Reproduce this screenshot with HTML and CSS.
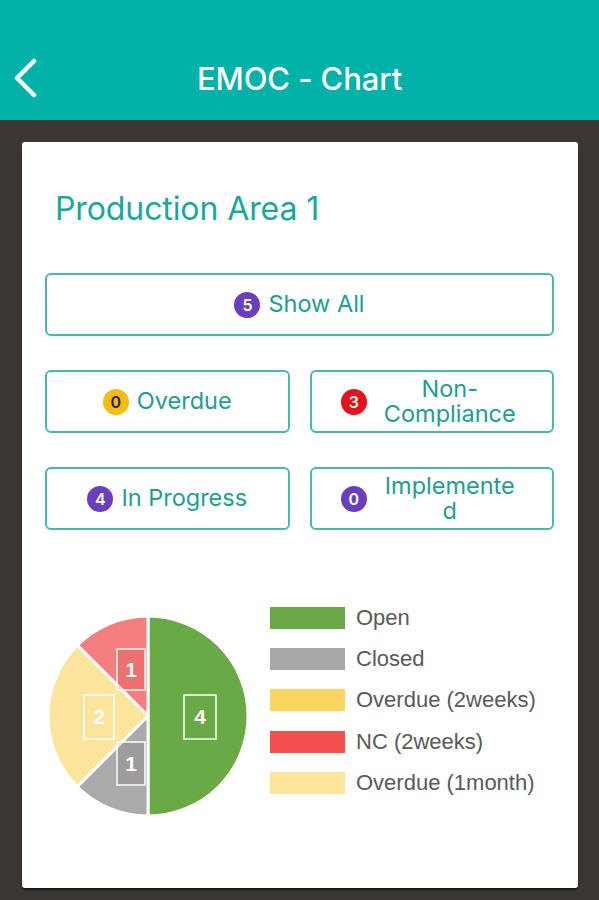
FILE: index.html
```html
<!DOCTYPE html>
<html lang="en">
<head>
  <meta charset="UTF-8" />
  <meta name="viewport" content="width=device-width, initial-scale=1.0"/>
  <title>EMOC - Chart</title>
  <link rel="stylesheet" href="styles.css">
</head>
<body>

  <!-- Top Bar -->
  <header class="topbar">
    <button class="back" aria-label="Back">
      <svg width="26" height="40" viewBox="0 0 26 40">
        <path d="M22 3 L5 20 L22 37" fill="none" stroke="#fff" stroke-width="4.5" stroke-linecap="round" stroke-linejoin="round"/>
      </svg>
    </button>
    <h1>EMOC - Chart</h1>
  </header>

  <main class="card">
    <h2 class="area-title">Production Area 1</h2>

    <!-- Filters -->
    <div class="filters">
      <button class="filter filter-wide">
        <span class="badge badge-purple">5</span>
        <span class="filter-label">Show All</span>
      </button>
      <button class="filter">
        <span class="badge badge-yellow">0</span>
        <span class="filter-label">Overdue</span>
      </button>
      <button class="filter">
        <span class="badge badge-red">3</span>
        <span class="filter-label filter-label-block">Non-<br>Compliance</span>
      </button>
      <button class="filter">
        <span class="badge badge-purple">4</span>
        <span class="filter-label">In Progress</span>
      </button>
      <button class="filter">
        <span class="badge badge-purple">0</span>
        <span class="filter-label filter-label-block">Implemente<br>d</span>
      </button>
    </div>

    <!-- Chart -->
    <div class="chart">
      <svg class="pie" width="204" height="204" viewBox="-102 -102 204 204">
        <g stroke="#fff" stroke-width="3" stroke-linejoin="round">
          <path d="M0 0 L0 -100 A100 100 0 0 1 0 100 Z" fill="#6aaa46"/>
          <path d="M0 0 L0 -100 A100 100 0 0 0 -70.7 -70.7 Z" fill="#f47e7e"/>
          <path d="M0 0 L-70.7 -70.7 A100 100 0 0 0 -70.7 70.7 Z" fill="#fbe49b"/>
          <path d="M0 0 L-70.7 70.7 A100 100 0 0 0 0 100 Z" fill="#aba9a9"/>
        </g>
        <g class="pie-labels" fill="none" stroke="#fff" stroke-width="1.5">
          <rect x="36" y="-21" width="32" height="44"/>
          <rect x="-64" y="-21" width="30" height="44"/>
          <rect x="-31" y="-67" width="28" height="41" fill="rgba(200,40,40,0.15)"/>
          <rect x="-31" y="26" width="28" height="43" fill="rgba(0,0,0,0.08)"/>
        </g>
        <g class="pie-values" fill="#fff" text-anchor="middle">
          <text x="52" y="8">4</text>
          <text x="-49" y="8">2</text>
          <text x="-17" y="-39">1</text>
          <text x="-17" y="55">1</text>
        </g>
      </svg>

      <ul class="legend">
        <li><span class="swatch swatch-open"></span>Open</li>
        <li><span class="swatch swatch-closed"></span>Closed</li>
        <li><span class="swatch swatch-overdue2w"></span>Overdue (2weeks)</li>
        <li><span class="swatch swatch-nc"></span>NC (2weeks)</li>
        <li><span class="swatch swatch-overdue1m"></span>Overdue (1month)</li>
      </ul>
    </div>
  </main>

</body>
</html>
```

FILE: styles.css
```css
/* Base Reset */
* {
  margin: 0;
  padding: 0;
  box-sizing: border-box;
  font-family: 'Inter', 'Liberation Sans', sans-serif;
}

body {
  background: #3b3734;
  min-height: 100vh;
  width: 599px;
  overflow: hidden;
}

/* Top Bar */
.topbar {
  height: 120px;
  padding-top: 36px;
  background: #02b1a7;
  display: flex;
  align-items: center;
  justify-content: center;
  position: relative;
}

.topbar h1 {
  color: #fff;
  font-size: 31px;
  font-weight: 500;
  letter-spacing: -0.1px;
}

.back {
  position: absolute;
  left: 12px;
  top: 58px;
  background: none;
  border: none;
  display: flex;
}

/* Card */
.card {
  margin: 22px 21px 0 22px;
  height: 746px;
  background: #fff;
  border-radius: 3px;
  padding: 49px 24px 0 23px;
  box-shadow: 0 2px 2px rgba(0, 0, 0, 0.6);
}

.area-title {
  color: #16a99a;
  font-size: 32px;
  font-weight: 400;
  line-height: 36px;
  padding-left: 10px;
  letter-spacing: -0.1px;
}

/* Filters */
.filters {
  margin-top: 46px;
  display: grid;
  grid-template-columns: 1fr 1fr;
  column-gap: 20px;
  row-gap: 34px;
}

.filter {
  height: 63px;
  background: #fff;
  border: 2px solid #46b9ab;
  border-radius: 6px;
  display: flex;
  align-items: center;
  justify-content: center;
  gap: 8px;
  color: #1e9e8f;
  font-size: 23.5px;
  cursor: pointer;
}

.filter-wide {
  grid-column: span 2;
}

.filter-label {
  line-height: 24.5px;
}

.filter-label-block {
  width: 146px;
  text-align: center;
  margin-left: 2px;
}

.badge {
  width: 26px;
  height: 26px;
  border-radius: 50%;
  display: inline-flex;
  align-items: center;
  justify-content: center;
  font-size: 16px;
  font-weight: 600;
  color: #fff;
  flex-shrink: 0;
}

.badge-purple {
  background: #6a3fbf;
}

.badge-yellow {
  background: #f4bb12;
  color: #222;
}

.badge-red {
  background: #e8121b;
}

/* Chart */
.chart {
  margin-top: 74px;
  display: flex;
  align-items: flex-start;
}

.pie {
  margin-left: 1px;
  margin-top: 10px;
  flex-shrink: 0;
}

.pie-values text {
  font-size: 21px;
  font-weight: 700;
  font-family: 'Liberation Sans', sans-serif;
}

.legend {
  list-style: none;
  margin-left: 20px;
  margin-top: 3px;
  display: flex;
  flex-direction: column;
  gap: 19.2px;
}

.legend li {
  display: flex;
  align-items: center;
  gap: 11px;
  height: 22px;
  color: #595959;
  font-family: 'Liberation Sans', sans-serif;
  font-size: 22px;
}

.swatch {
  width: 75px;
  height: 22px;
  display: inline-block;
}

.swatch-open { background: #6aaa46; }
.swatch-closed { background: #a9a7a7; }
.swatch-overdue2w { background: #fcd561; }
.swatch-nc { background: #f44f4f; }
.swatch-overdue1m { background: #fde59c; }
```
